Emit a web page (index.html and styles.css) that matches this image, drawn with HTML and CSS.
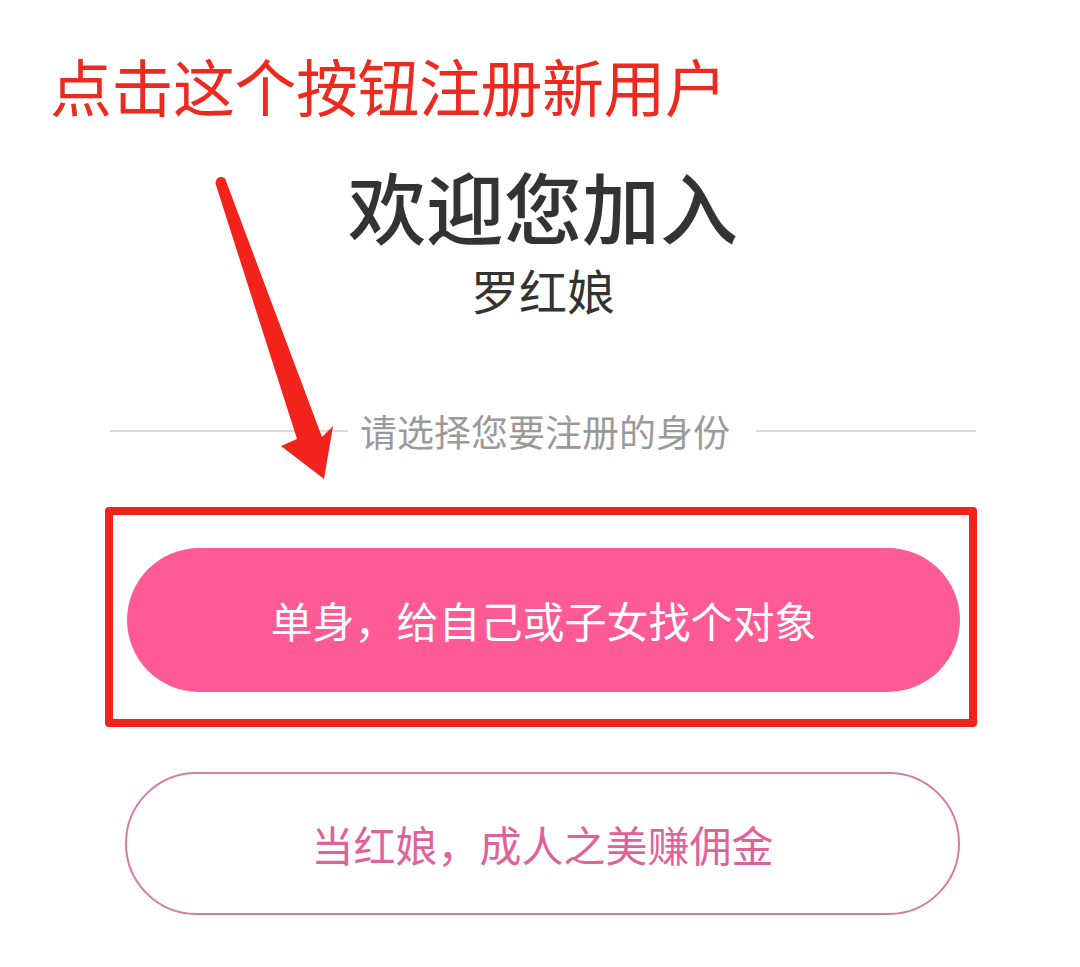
FILE: index.html
```html
<!DOCTYPE html>
<html lang="zh">
<head>
<meta charset="utf-8">
<title>欢迎您加入</title>
<link rel="stylesheet" href="styles.css">
</head>
<body>
<div class="page">
  <p class="note">点击这个按钮注册新用户</p>
  <main class="panel">
    <h1 class="title">欢迎您加入</h1>
    <p class="brand">罗红娘</p>
    <div class="divider">
      <span class="line line-left"></span>
      <span class="divider-text">请选择您要注册的身份</span>
      <span class="line line-right"></span>
    </div>
    <div class="highlight">
      <button class="btn btn-primary">单身，给自己或子女找个对象</button>
    </div>
    <button class="btn btn-outline">当红娘，成人之美赚佣金</button>
  </main>
  <svg class="arrow" width="1080" height="967" viewBox="0 0 1080 967" aria-hidden="true">
    <path d="M215.5 183.5 Q216 176 222 177 Q226 178 226 181 L322 437 L333 426 L324 479 L281 446 L297 439 Z" fill="#f3221b"/>
  </svg>
</div>
</body>
</html>
```

FILE: styles.css
```css
html, body {
  margin: 0;
  padding: 0;
  background: #ffffff;
}

body {
  font-family: "Noto Sans CJK SC", "Noto Sans", sans-serif;
}

.page {
  position: relative;
  width: 1080px;
  height: 967px;
  overflow: hidden;
  padding-top: 54px;
  box-sizing: border-box;
}

.note {
  margin: 0 0 0 50px;
  font-size: 62px;
  line-height: 62px;
  height: 62px;
  color: #ec2a1f;
  font-weight: 400;
  letter-spacing: -0.5px;
  white-space: nowrap;
}

.panel {
  margin: 50px 0 0 110px;
  width: 866px;
  display: flex;
  flex-direction: column;
  align-items: center;
}

.title {
  margin: 0;
  font-size: 78px;
  line-height: 78px;
  height: 78px;
  font-weight: 500;
  color: #333333;
}

.brand {
  margin: 21px 0 0;
  font-size: 48px;
  line-height: 48px;
  height: 48px;
  color: #333333;
  font-weight: 400;
}

.divider {
  margin-top: 99px;
  width: 100%;
  display: flex;
  align-items: center;
}

.line {
  height: 2px;
  background: #d9d9d9;
}

.line-left {
  flex: 0 0 238px;
}

.line-right {
  flex: 1 1 auto;
}

.divider-text {
  margin: 0 26px 0 12px;
  font-size: 37px;
  line-height: 38px;
  height: 38px;
  color: #9a9a9a;
  white-space: nowrap;
}

.highlight {
  align-self: stretch;
  margin: 57px -1px 0 -5px;
  border: 8px solid #f2221b;
  border-radius: 4px;
  padding: 33px 9px 27px 14px;
  display: flex;
}

.btn {
  font-family: "Noto Sans CJK SC", "Noto Sans", sans-serif;
  font-size: 42px;
  line-height: 1;
  border-radius: 72px;
  cursor: pointer;
  padding: 0;
  display: flex;
  align-items: center;
  justify-content: center;
}

.btn-primary {
  flex: 1 1 auto;
  height: 144px;
  border: none;
  background: #fe5a96;
  color: #ffffff;
}

.btn-outline {
  align-self: flex-start;
  margin: 45px 0 0 15px;
  width: 835px;
  height: 143px;
  border: 2px solid #d87ba1;
  background: #ffffff;
  color: #e0629b;
}

.arrow {
  position: absolute;
  left: 0;
  top: 0;
  pointer-events: none;
}
```
